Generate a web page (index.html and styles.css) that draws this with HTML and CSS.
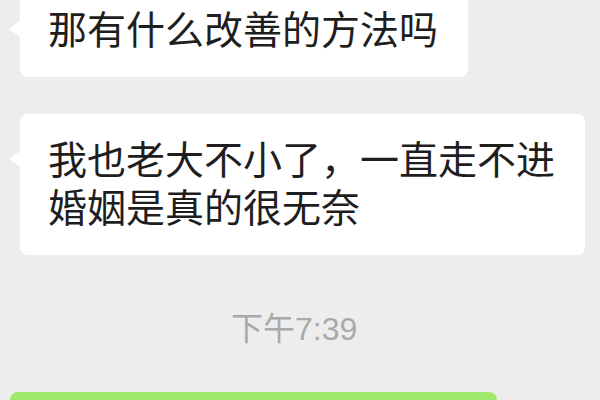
FILE: index.html
```html
<!DOCTYPE html>
<html lang="zh-CN">
<head>
<meta charset="utf-8">
<link rel="stylesheet" href="styles.css">
</head>
<body>
<div class="chat">
  <div class="bubble left first">那有什么改善的方法吗</div>
  <div class="bubble left second">我也老大不小了，一直走不进婚姻是真的很无奈</div>
  <div class="time">下午7:39</div>
  <div class="bubble green"></div>
</div>
</body>
</html>
```
FILE: styles.css
```css
html, body {
  margin: 0;
  padding: 0;
  width: 600px;
  height: 400px;
  overflow: hidden;
  background: #ededed;
}
.chat {
  display: flex;
  flex-direction: column;
  align-items: flex-start;
  font-family: "Noto Sans CJK SC", "Noto Sans", sans-serif;
}
.bubble {
  position: relative;
  background: #ffffff;
  border-radius: 8px;
  color: #1e1e1e;
  font-size: 39px;
  line-height: 48px;
  box-sizing: border-box;
}
.left {
  margin-left: 20px;
  padding: 19px 30px 26px 28px;
}
.left::before {
  content: "";
  position: absolute;
  left: -11px;
  top: 37px;
  width: 0;
  height: 0;
  border-top: 8px solid transparent;
  border-bottom: 8px solid transparent;
  border-right: 11px solid #ffffff;
}
.first {
  margin-top: -16px;
}
.second {
  margin-top: 37px;
  width: 565px;
}
.time {
  align-self: flex-start;
  margin-left: 231px;
  margin-top: 53px;
  font-family: "Liberation Sans", "Noto Sans CJK SC", sans-serif;
  font-size: 32px;
  line-height: 42px;
  color: #a9a9a9;
}
.green {
  margin-top: 42px;
  margin-left: 10px;
  width: 487px;
  height: 60px;
  background: #9ee86e;
}
```
